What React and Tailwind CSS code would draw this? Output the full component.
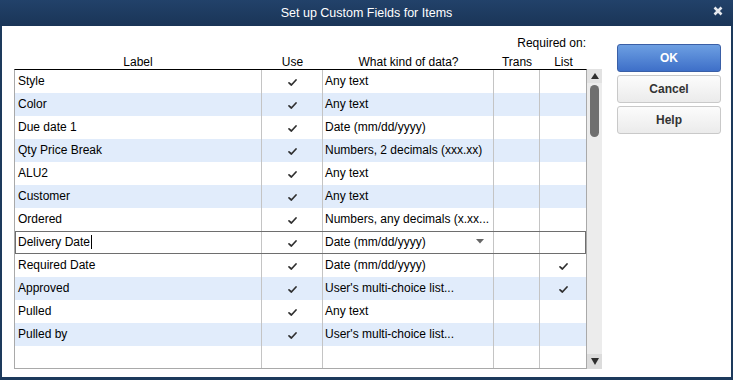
import React from 'react';

const rows = [
  { label: 'Style', type: 'Any text', list: false },
  { label: 'Color', type: 'Any text', list: false },
  { label: 'Due date 1', type: 'Date (mm/dd/yyyy)', list: false },
  { label: 'Qty Price Break', type: 'Numbers, 2 decimals (xxx.xx)', list: false },
  { label: 'ALU2', type: 'Any text', list: false },
  { label: 'Customer', type: 'Any text', list: false },
  { label: 'Ordered', type: 'Numbers, any decimals (x.xx...', list: false },
  { label: 'Delivery Date', type: 'Date (mm/dd/yyyy)', list: false, editing: true },
  { label: 'Required Date', type: 'Date (mm/dd/yyyy)', list: true },
  { label: 'Approved', type: "User's multi-choice list...", list: true },
  { label: 'Pulled', type: 'Any text', list: false },
  { label: 'Pulled by', type: "User's multi-choice list...", list: false },
];

function Check() {
  return (
    <svg width="9" height="7" viewBox="0 0 9 7">
      <path d="M1 3.8 L3.4 6 L8 1" fill="none" stroke="#2f2f2f" strokeWidth="1.7" strokeLinecap="round" strokeLinejoin="round" />
    </svg>
  );
}

function Row({ row, index }) {
  const band = index % 2 === 1 ? 'bg-[#e1ecfb]' : 'bg-white';
  return (
    <div
      className={`flex h-[23px] shrink-0 ${band} ${
        row.editing ? 'bg-white outline outline-1 -outline-offset-1 outline-[#6e6e6e] relative z-10' : ''
      }`}
    >
      <div className="w-[247px] border-r border-[#c4c4c4] flex items-center pl-[3px] pb-[2px]">
        <span>{row.label}</span>
        {row.editing && <span className="ml-[1px] w-[1px] h-[14px] bg-black" />}
      </div>
      <div className="w-[61px] border-r border-[#c4c4c4] flex items-center justify-center pt-[1px]">
        <Check />
      </div>
      <div className="w-[171px] border-r border-[#c4c4c4] flex items-center pl-[2px] pr-[8px] pb-[2px] justify-between">
        <span className="whitespace-nowrap">{row.type}</span>
        {row.editing && (
          <svg width="8" height="5" viewBox="0 0 8 5" className="mr-[1px]">
            <path d="M0 0 L8 0 L4 4.5 Z" fill="#666" />
          </svg>
        )}
      </div>
      <div className="w-[46px] border-r border-[#c4c4c4]" />
      <div className="flex-1 flex items-center justify-center pt-[1px]">{row.list && <Check />}</div>
    </div>
  );
}

function Button({ children, primary }) {
  return (
    <button
      className={`w-[104px] h-[28px] rounded-[3px] border text-[12px] font-bold font-['Liberation_Sans',Arial,sans-serif] ${
        primary
          ? 'border-[#3a5fa6] bg-gradient-to-b from-[#6d9fe2] to-[#3e6fc8] text-white'
          : 'border-[#c9c9c9] bg-gradient-to-b from-[#fcfcfc] to-[#ebebeb] text-[#333]'
      }`}
    >
      {children}
    </button>
  );
}

export default function App() {
  return (
    <div className="w-[733px] h-[380px] bg-[#1d3a5c] flex flex-col text-[12px] text-black font-['Liberation_Sans',Arial,sans-serif]">
      {/* TITLE BAR */}
      <div className="h-[26px] shrink-0 flex items-center justify-center relative bg-gradient-to-b from-[#22426a] to-[#1a3557]">
        <span className="text-white text-[12.5px]">Set up Custom Fields for Items</span>
        <svg width="10" height="10" viewBox="0 0 10 10" className="absolute right-[10px] top-[6px]">
          <path d="M1.5 1.5 L8.5 8.5 M8.5 1.5 L1.5 8.5" stroke="#e6e9ee" strokeWidth="2.6" />
        </svg>
      </div>

      {/* BODY */}
      <div className="flex-1 bg-white ml-[2px] mr-[2px] mb-[3px] flex">
        <div className="pl-[12px] pt-[10px] flex flex-col">
          <div className="w-[573px] h-[14px] leading-[14px] text-right pr-[1px]">Required on:</div>
          <div className="w-[573px] h-[14px] leading-[14px] mt-[5px] flex">
            <div className="w-[248px] text-center">Label</div>
            <div className="w-[61px] text-center">Use</div>
            <div className="w-[171px] text-center">What kind of data?</div>
            <div className="w-[46px] text-center">Trans</div>
            <div className="flex-1 text-center">List</div>
          </div>

          <div className="flex h-[300px]">
            {/* TABLE */}
            <div className="w-[573px] border-t border-t-black border-l border-r border-b border-[#a9a9a9] flex flex-col">
              {rows.map((row, i) => (
                <Row key={row.label} row={row} index={i} />
              ))}
              <div className="flex flex-1">
                <div className="w-[247px] border-r border-[#c4c4c4]" />
                <div className="w-[61px] border-r border-[#c4c4c4]" />
                <div className="w-[171px] border-r border-[#c4c4c4]" />
                <div className="w-[46px] border-r border-[#c4c4c4]" />
                <div className="flex-1" />
              </div>
            </div>

            {/* SCROLLBAR */}
            <div className="w-[15px] bg-[#ececec] flex flex-col items-center">
              <div className="h-[14px] w-full flex items-center justify-center bg-[#e2e2e2]">
                <svg width="8" height="6" viewBox="0 0 8 6">
                  <path d="M4 0 L8 6 L0 6 Z" fill="#2e2e2e" />
                </svg>
              </div>
              <div className="mt-[2px] w-[9px] h-[52px] rounded-full bg-[#6f6f6f]" />
              <div className="flex-1" />
              <div className="h-[15px] w-full flex items-center justify-center bg-[#dcdcdc]">
                <svg width="8" height="7" viewBox="0 0 8 7">
                  <path d="M0 0 L8 0 L4 7 Z" fill="#2e2e2e" />
                </svg>
              </div>
            </div>
          </div>
        </div>

        {/* BUTTONS */}
        <div className="ml-[15px] mt-[18px] flex flex-col gap-[3px]">
          <Button primary>OK</Button>
          <Button>Cancel</Button>
          <Button>Help</Button>
        </div>
      </div>
    </div>
  );
}
